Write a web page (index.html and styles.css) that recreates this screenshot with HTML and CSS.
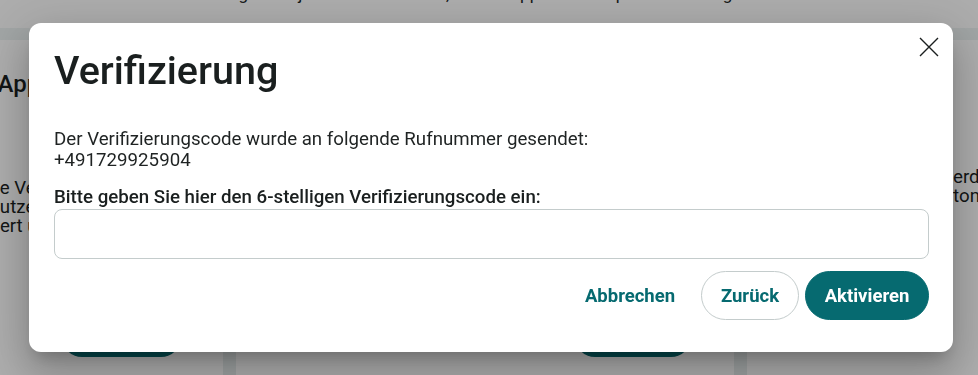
FILE: index.html
```html
<!DOCTYPE html>
<html lang="de">
	<head>
		<meta charset="utf-8">
		<title>Verifizierung</title>
		<link rel="stylesheet" href="styles.css">
	</head>
	<body>
		<div class="page">
			<p class="notice">Bitte folgen Sie jetzt den Hinweisen, um die App zu verknüpfen und zu registrieren.</p>
			<div class="band"></div>
			<ul class="cards">
				<li class="card card-left">
					<h2><span>Die App</span></h2>
					<p>
						<span class="l1">Die Verifizierung</span>
						<span class="l2">Benutzer</span>
						<span class="l3">aktiviert und</span>
					</p>
					<span class="card-btn"></span>
				</li>
				<li class="card card-mid">
					<span class="card-btn"></span>
				</li>
				<li class="card card-right">
					<p>
						<span class="r1">werden</span>
						<span class="r2">Button</span>
					</p>
				</li>
			</ul>
		</div><!-- /page -->

		<div class="backdrop"></div>

		<div class="dialog" role="dialog">
			<button class="close" aria-label="Schließen">
				<svg width="20" height="20" viewBox="0 0 20 20"><path d="M1 1 L19 19 M19 1 L1 19" stroke="#1b1f1f" stroke-width="1.4" fill="none"/></svg>
			</button>
			<h1>Verifizierung</h1>
			<p class="sent">Der Verifizierungscode wurde an folgende Rufnummer gesendet:<br>+491729925904</p>
			<label class="code-label" for="code">Bitte geben Sie hier den 6-stelligen Verifizierungscode ein:</label>
			<input class="code" id="code" type="text">
			<div class="actions">
				<button class="btn btn-text">Abbrechen</button>
				<button class="btn btn-outline">Zurück</button>
				<button class="btn btn-fill">Aktivieren</button>
			</div>
		</div><!-- /dialog -->
	</body>
</html>
```

FILE: styles.css
```css
*, *:after, *:before { box-sizing: border-box; }

html, body {
	margin: 0;
	height: 100%;
	overflow: hidden;
}

body {
	background: #fff;
	font-family: Roboto, "Liberation Sans", Arial, sans-serif;
	color: #1b1f1f;
}

/*************************************
Page behind the dialog
**************************************/

.notice {
	margin: -16px 0 0;
	height: 44px;
	line-height: 20px;
	font-size: 17px;
	text-align: center;
}

.band {
	height: 12px;
	background: #eef3f3;
}

.cards {
	list-style: none;
	margin: 0;
	padding: 0;
	display: grid;
	grid-template-columns: 223px 498px 1fr;
	gap: 13px;
	background: #e8eeee;
	height: 340px;
}

.card {
	background: #fff;
	display: flex;
	flex-direction: column;
	font-size: 18.7px;
	white-space: nowrap;
}

.card h2 {
	margin: 29px 0 0;
	width: 40px;
	overflow: hidden;
	font-size: 24px;
	font-weight: 500;
	line-height: 30px;
}

.card h2 span {
	display: block;
	margin-left: -43px;
}

.card p {
	margin: 0;
	line-height: 19px;
}

.card p span {
	display: block;
}

.card-left p {
	margin-top: 80px;
	width: 40px;
	overflow: hidden;
}

.card-left .l1 { margin-left: -17px; }
.card-left .l2 { margin-left: -32px; }
.card-left .l3 { margin-left: -44px; }

.card-right p {
	margin-top: 128px;
}

.card-right .r1 { margin-left: 192px; }
.card-right .r2 { margin-left: 178px; }

.card-btn {
	margin-top: auto;
	margin-bottom: 23px;
	height: 40px;
	border-radius: 20px;
	background: #066a70;
}

.card-left .card-btn {
	margin-left: 62px;
	width: 119px;
}

.card-mid .card-btn {
	margin-left: 339px;
	width: 116px;
}

/*************************************
Backdrop and dialog
**************************************/

.backdrop {
	position: fixed;
	inset: 0;
	background: rgba(0,0,0,0.32);
}

.dialog {
	position: absolute;
	left: 29px;
	top: 23px;
	width: 924px;
	height: 329px;
	padding: 26px 24px 31px 25px;
	background: #fff;
	border-radius: 12px;
	box-shadow: 0 11px 15px -7px rgba(0,0,0,0.2), 0 24px 38px 3px rgba(0,0,0,0.14), 0 9px 46px 8px rgba(0,0,0,0.12);
	display: flex;
	flex-direction: column;
}

.close {
	position: absolute;
	top: 14px;
	right: 14px;
	width: 20px;
	height: 20px;
	padding: 0;
	border: 0;
	background: none;
}

.close svg {
	display: block;
}

.dialog h1 {
	margin: 0 0 36px;
	font-size: 39.5px;
	line-height: 44px;
	font-weight: 500;
	color: #1a1f1f;
}

.sent {
	margin: 0 0 16px;
	font-size: 18.7px;
	line-height: 21px;
	color: #1f2323;
}

.code-label {
	font-size: 18.7px;
	line-height: 21px;
	font-weight: 500;
	color: #1a1f1f;
}

.code {
	margin-top: 1px;
	height: 50px;
	border: 1px solid #c4cccc;
	border-radius: 8px;
	font: inherit;
	padding: 0 16px;
}

.actions {
	margin-top: 12px;
	display: flex;
	justify-content: flex-end;
	gap: 6px;
}

.btn {
	height: 49px;
	border-radius: 25px;
	font-family: inherit;
	font-size: 18.5px;
	font-weight: 700;
	padding: 0;
	background: none;
	border: 1px solid transparent;
	color: #066a70;
}

.btn-text {
	width: 122px;
	margin-right: 4px;
}

.btn-outline {
	border-color: #c4cccc;
	width: 98px;
}

.btn-fill {
	background: #066a70;
	border-color: #066a70;
	color: #fff;
	width: 124px;
}
```
